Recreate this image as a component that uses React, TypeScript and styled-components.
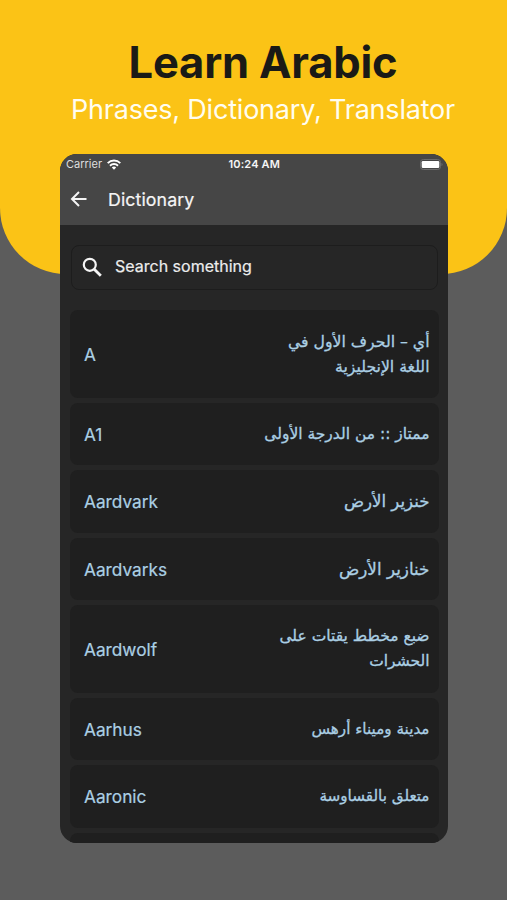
import React from "react";
import styled, { createGlobalStyle } from "styled-components";

const GlobalStyle = createGlobalStyle`
  * { box-sizing: border-box; }
  body { margin: 0; background: #5c5c5c; }
`;

const Page = styled.div`
  width: 507px;
  height: 900px;
  overflow: hidden;
  background: #5c5c5c;
  font-family: Inter, "Liberation Sans", sans-serif;
  display: grid;
  grid-template: 900px / 507px;
`;

const Hero = styled.div`
  grid-area: 1 / 1;
  height: 274px;
  background: #fbc316;
  border-radius: 0 0 66px 66px;
`;

const Content = styled.div`
  grid-area: 1 / 1;
  display: flex;
  flex-direction: column;
`;

const Title = styled.h1`
  margin: 37px 0 0 19px;
  height: 50px;
  line-height: 50px;
  text-align: center;
  font-size: 43.5px;
  font-weight: 700;
  letter-spacing: -0.2px;
  color: #1a1a16;
  white-space: nowrap;
`;

const Subtitle = styled.p`
  margin: 5px 0 0 19px;
  height: 36px;
  line-height: 36px;
  text-align: center;
  font-size: 27px;
  font-weight: 400;
  letter-spacing: -0.2px;
  color: #fffdf0;
  white-space: nowrap;
`;

const Phone = styled.main`
  margin: 26.4px 0 0 60px;
  width: 387.5px;
  height: 689px;
  border-radius: 17px;
  overflow: hidden;
  background: #262626;
`;

const Header = styled.header`
  height: 71px;
  background: #464646;
  color: #f5f5f5;
`;

const StatusBar = styled.div`
  height: 20px;
  padding: 0 5px 0 6px;
  display: grid;
  grid-template-columns: 1fr auto 1fr;
  align-items: center;
  font-size: 11px;
  line-height: 20px;
`;

const Carrier = styled.span`
  display: flex;
  align-items: center;
  gap: 4.5px;
  color: #dedede;
`;

const Clock = styled.span`
  font-weight: 600;
  letter-spacing: 0.15px;
`;

const Battery = styled.svg`
  justify-self: end;
`;

const AppBar = styled.div`
  height: 49.5px;
  padding-left: 10px;
  display: flex;
  align-items: center;
  gap: 20px;
`;

const ScreenTitle = styled.h2`
  margin: 0;
  font-weight: 400;
  font-size: 17.75px;
  letter-spacing: 0.1px;
  -webkit-text-stroke: 0.2px currentColor;
`;

const SearchField = styled.div`
  margin: 19.5px 10px 0 11px;
  height: 45px;
  border: 1px solid #1d1d1d;
  border-radius: 8px;
  display: flex;
  align-items: center;
  padding-left: 8px;
  gap: 11px;
  color: #ededed;
`;

const Placeholder = styled.span`
  font-size: 16px;
  padding-bottom: 2px;
  -webkit-text-stroke: 0.2px currentColor;
`;

const List = styled.ul`
  list-style: none;
  margin: 20.5px 9px 0 10px;
  padding: 0;
  display: flex;
  flex-direction: column;
  gap: 5px;
`;

const Entry = styled.li<{ $tall?: boolean }>`
  flex: none;
  height: ${(p) => (p.$tall ? 87.5 : 62.5)}px;
  padding: 0 9px 0 14px;
  border-radius: 8px;
  background: #1f1f1f;
  color: #abcfe4;
  display: flex;
  align-items: center;
  justify-content: space-between;
`;

const Word = styled.span`
  font-size: 17.25px;
  -webkit-text-stroke: 0.2px currentColor;
`;

const Meaning = styled.span<{ $size?: number }>`
  direction: rtl;
  text-align: right;
  font-family: "DejaVu Sans", sans-serif;
  font-size: ${(p) => p.$size ?? 15.5}px;
  line-height: 25px;
  white-space: nowrap;
  -webkit-text-stroke: 0.3px currentColor;
`;

const Line = styled.span`
  display: block;
`;

const entries: { word: string; lines: string[]; size?: number }[] = [
  { word: "A", lines: ["أي – الحرف الأول في", "اللغة الإنجليزية"], size: 15.7 },
  { word: "A1", lines: ["ممتاز :: من الدرجة الأولى"] },
  { word: "Aardvark", lines: ["خنزير الأرض"], size: 16.6 },
  { word: "Aardvarks", lines: ["خنازير الأرض"], size: 16.8 },
  { word: "Aardwolf", lines: ["ضبع مخطط يقتات على", "الحشرات"] },
  { word: "Aarhus", lines: ["مدينة وميناء أرهس"], size: 15.2 },
  { word: "Aaronic", lines: ["متعلق بالقساوسة"], size: 15.2 },
  { word: "", lines: [] },
];

export default function App() {
  return (
    <Page>
      <GlobalStyle />
      <Hero />
      <Content>
        <Title>Learn Arabic</Title>
        <Subtitle>Phrases, Dictionary, Translator</Subtitle>
        <Phone>
          <Header>
            <StatusBar>
              <Carrier>
                Carrier
                <svg width="14" height="11" viewBox="0 0 14 11" fill="none" stroke="#fff" strokeWidth="1.9">
                  <path d="M0.7 4.1a9 9 0 0 1 12.6 0" />
                  <path d="M3 6.7a5.7 5.7 0 0 1 8 0" />
                  <path d="M7 10.8 4.8 8.5a3.2 3.2 0 0 1 4.4 0Z" fill="#fff" stroke="none" />
                </svg>
              </Carrier>
              <Clock>10:24 AM</Clock>
              <Battery width="23" height="11" viewBox="0 0 23 11">
                <rect x="0.5" y="0.5" width="20" height="10" rx="2.8" fill="none" stroke="#6c6c6c" />
                <rect x="1.7" y="1.9" width="17.6" height="7.2" rx="1.3" fill="#fff" />
                <path d="M21.5 3.8c1.4.5 1.4 2.9 0 3.4Z" fill="#6c6c6c" />
              </Battery>
            </StatusBar>
            <AppBar>
              <svg width="18" height="18" viewBox="0 0 18 18" fill="none" stroke="#f5f5f5" strokeWidth="2">
                <path d="M16.5 9H2.5M9 2 2 9l7 7" />
              </svg>
              <ScreenTitle>Dictionary</ScreenTitle>
            </AppBar>
          </Header>
          <SearchField>
            <svg width="24" height="24" viewBox="0 0 24 24" fill="none" stroke="#f5f5f5">
              <circle cx="9.8" cy="9.8" r="6" strokeWidth="2.2" />
              <path d="m14 14 6.8 6.8" strokeWidth="2.8" />
            </svg>
            <Placeholder>Search something</Placeholder>
          </SearchField>
          <List>
            {entries.map((e, i) => (
              <Entry key={i} $tall={e.lines.length > 1}>
                <Word>{e.word}</Word>
                <Meaning lang="ar" $size={e.size}>
                  {e.lines.map((l) => (
                    <Line key={l}>{l}</Line>
                  ))}
                </Meaning>
              </Entry>
            ))}
          </List>
        </Phone>
      </Content>
    </Page>
  );
}
